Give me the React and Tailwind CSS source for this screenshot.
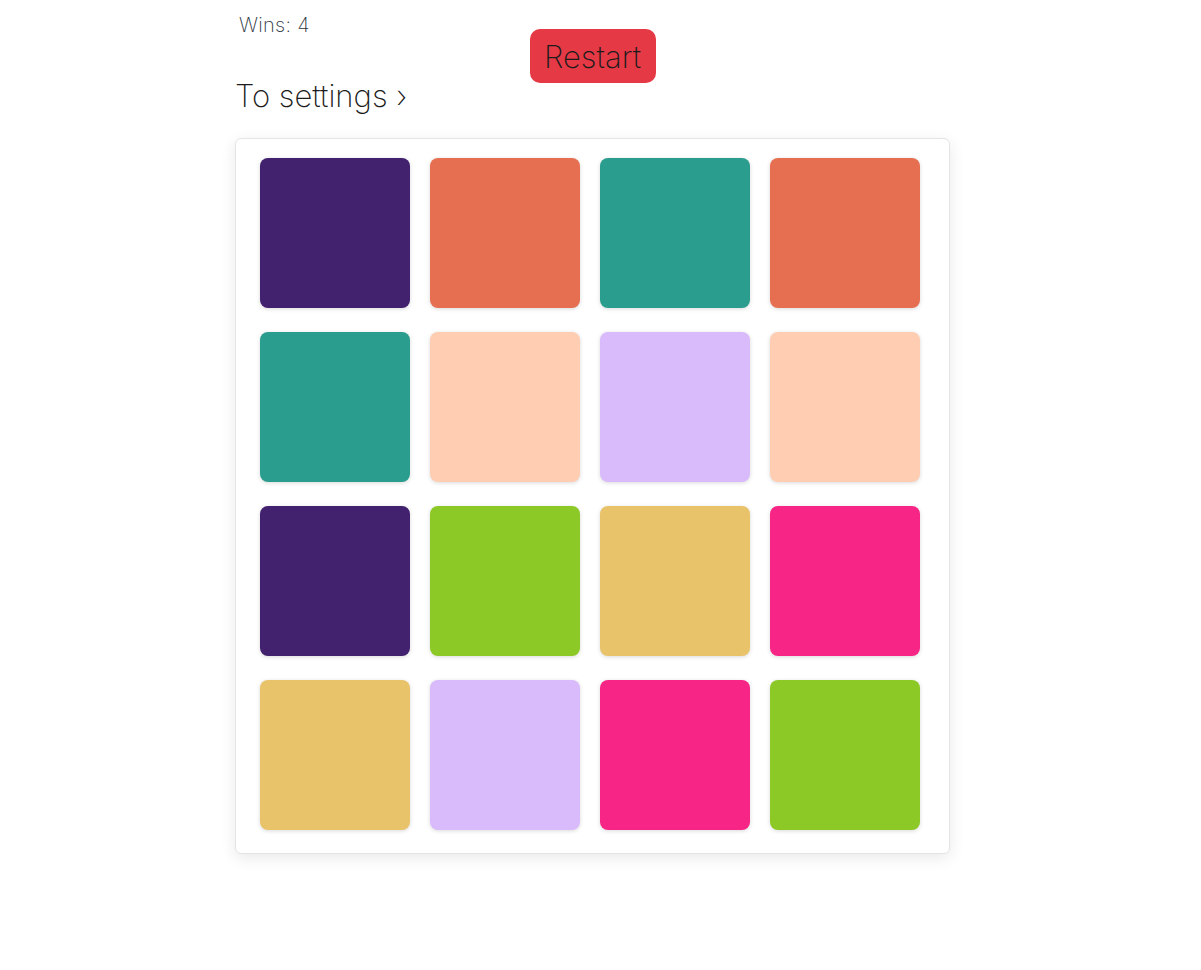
export default function App() {
  const colors = [
    "#42226e", "#e76f51", "#2a9d8f", "#e76f51",
    "#2a9d8f", "#fecdb2", "#d9bbfc", "#fecdb2",
    "#42226e", "#8cc926", "#e8c36a", "#f72585",
    "#e8c36a", "#d9bbfc", "#f72585", "#8cc926",
  ];
  return (
    <div className="min-h-[970px] bg-white" style={{ fontFamily: "Inter, 'Open Sans', sans-serif" }}>
      <div className="ml-[235px] w-[715px] flex flex-col">
        <div className="pl-[4px] pt-[13px] h-[29px] text-[20px] leading-[24px] font-extralight text-[#2b3440] tracking-[0.3px]">Wins: 4</div>
        <div className="flex justify-center">
          <button className="w-[126px] h-[54px] rounded-[10px] bg-[#e63946] text-[31px] font-extralight text-[#1b1b1b] leading-none">Restart</button>
        </div>
        <div className="mt-[-5px] text-[31px] leading-[36px] font-extralight text-[#1b1b1b]">To settings ›</div>
        <div className="mt-[24px] w-[715px] h-[716px] rounded-[6px] border border-[#e4e4e4] bg-white shadow-[0_4px_16px_rgba(0,0,0,0.09)] pl-[24px] pt-[19px]">
          <div className="grid grid-cols-[repeat(4,150px)] gap-x-[20px] gap-y-[24px]">
            {colors.map((c, i) => (
              <div key={i} className="w-[150px] h-[150px] rounded-[8px] shadow-[0_1px_4px_rgba(0,0,0,0.15)]" style={{ backgroundColor: c }} />
            ))}
          </div>
        </div>
      </div>
    </div>
  );
}
